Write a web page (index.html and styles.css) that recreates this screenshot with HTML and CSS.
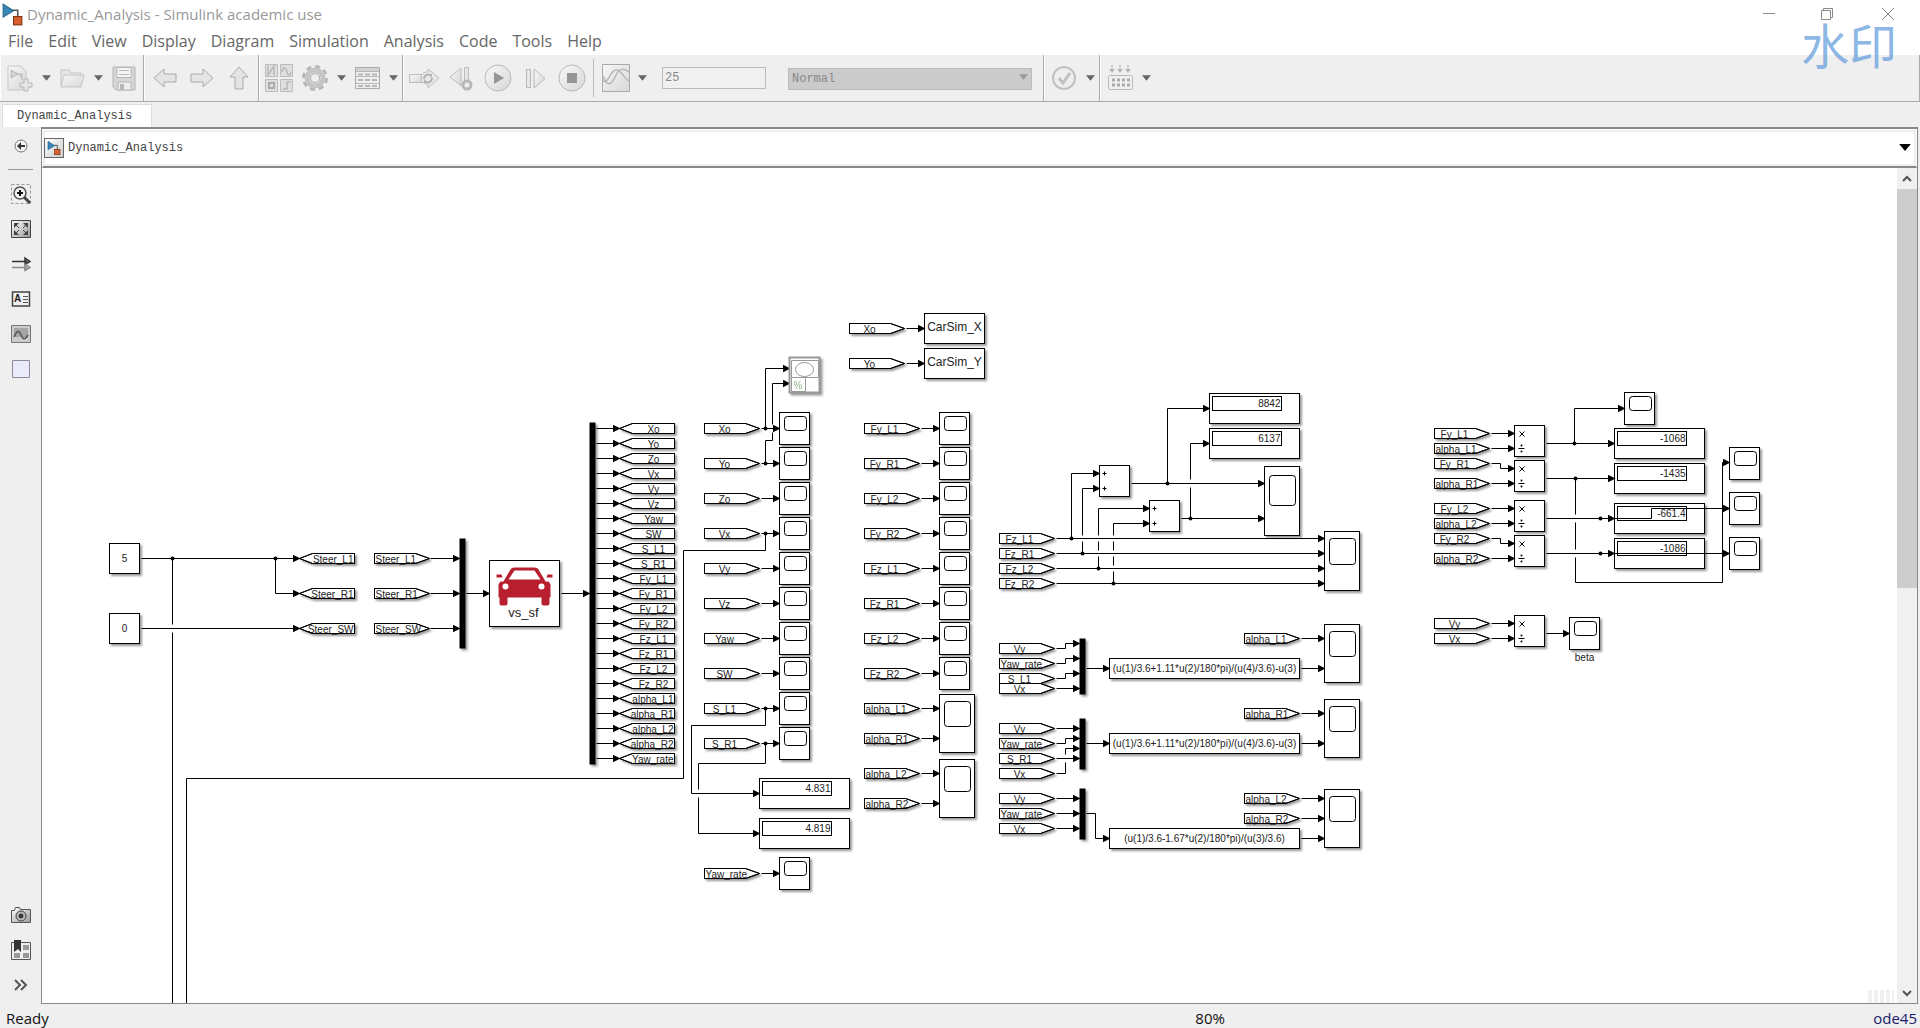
FILE: index.html
```html
<!DOCTYPE html>
<html lang="en">
<head>
  <meta charset="UTF-8" />
  <meta name="viewport" content="width=device-width, initial-scale=1.0" />
  <title>Dynamic_Analysis - Simulink academic use</title>
  <link rel="stylesheet" href="styles.css">
</head>
<body>
  <!-- shared gradients and symbols -->
  <svg class="defs" aria-hidden="true">
    <defs>
      <linearGradient id="soft" x1="0" y1="0" x2="1" y2="1">
        <stop offset="0" stop-color="#fafafa"/><stop offset="1" stop-color="#d2d2d2"/>
      </linearGradient>
      <linearGradient id="steel" x1="0" y1="0" x2="1" y2="1">
        <stop offset="0" stop-color="#fff"/><stop offset="1" stop-color="#999"/>
      </linearGradient>
      <symbol id="model" viewBox="0 0 20 24">
        <path d="M10 8h5v7" fill="none" stroke="#555" stroke-width="1.5"/>
        <path d="M1 2l10 6.500-10 6z" fill="#3a86b4" stroke="#23648e"/>
        <rect x="11" y="14" width="8" height="8" fill="#d65f30" stroke="#7e3013"/>
      </symbol>
      <symbol id="caret" viewBox="0 0 10 6"><path d="M0 0h10L5 6z" fill="#666"/></symbol>
    </defs>
  </svg>

  <header class="titlebar">
    <svg class="app-icon"><use href="#model"/></svg>
    <h1>Dynamic_Analysis - Simulink academic use</h1>
    <div class="window-buttons">
      <button aria-label="Minimize"><svg width="14" height="14"><path d="M1 6.500h12"/></svg></button>
      <button aria-label="Restore"><svg width="14" height="14"><path d="M1.500 3.500h9v9h-9zM3.500 3.500v-2h9v9h-2"/></svg></button>
      <button aria-label="Close"><svg width="14" height="14"><path d="M1 1l12 12M13 1L1 13"/></svg></button>
    </div>
  </header>

  <nav class="menu">
    <button>File</button>
    <button>Edit</button>
    <button>View</button>
    <button>Display</button>
    <button>Diagram</button>
    <button>Simulation</button>
    <button>Analysis</button>
    <button>Code</button>
    <button>Tools</button>
    <button>Help</button>
  </nav>

  <div class="toolbar">
    <div class="group">
      <button class="tool" aria-label="New model"><svg width="28" height="28">
        <path d="M2 2h13l5 5v19H2z" fill="url(#soft)" stroke="#bbb"/>
        <path d="M5 6l7 4-7 4zM12 10h4v6" fill="#ccc" stroke="#aaa"/>
        <path d="M18 15h4v4h4v4h-4v4h-4v-4h-4v-4h4z" fill="#e4e4e4" stroke="#aaa"/></svg></button>
      <button class="drop" aria-label="New options"><svg><use href="#caret"/></svg></button>
      <button class="tool" aria-label="Open"><svg width="28" height="28">
        <path d="M3 22V6h8l2 3h10v4" fill="#e4e4e4" stroke="#bbb"/>
        <path d="M6 11h20l-3 12H3z" fill="url(#soft)" stroke="#bbb"/></svg></button>
      <button class="drop" aria-label="Open options"><svg><use href="#caret"/></svg></button>
      <button class="tool" aria-label="Save"><svg width="28" height="28">
        <path d="M3 3h22v23H6l-3-3z" fill="#d2d2d2" stroke="#a5a5a5"/>
        <path d="M7 3.500h14v10H7z" fill="#f6f6f6" stroke="#aaa"/>
        <path d="M9 6.500h10M9 10.500h10" stroke="#aaa"/>
        <path d="M8 18h13v8H8z" fill="#eee" stroke="#aaa"/><path d="M10 20h4v6h-4z" fill="#aaa"/></svg></button>
    </div>
    <div class="group nav-group">
      <button class="tool" aria-label="Back"><svg width="28" height="28"><path d="M3 14L13 5v5h12v8H13v5z" fill="#e2e2e2" stroke="#999"/></svg></button>
      <button class="tool" aria-label="Forward"><svg width="28" height="28"><path d="M25 14L15 5v5H3v8h12v5z" fill="#e2e2e2" stroke="#999"/></svg></button>
      <button class="tool" aria-label="Up to parent"><svg width="28" height="28"><path d="M14 3l9 10h-5v12h-8V13H5z" fill="#e2e2e2" stroke="#999"/></svg></button>
    </div>
    <div class="group">
      <button class="tool" aria-label="Library browser"><svg width="28" height="28">
        <g fill="#dcdcdc" stroke="#b0b0b0"><path d="M.500.500h12v12H.500zM15.500.500h12v12h-12zM.500 15.500h12v12H.500zM15.500 15.500h12v12h-12z"/></g>
        <path d="M3 2v9L9 2v9M17 8c2-7 4-4 5 0s3 4 4 0M18 25h4v-7h4" fill="none" stroke="#aaa" stroke-width="1.500"/>
        <path d="M4 19h5v5H4z" fill="#ddd" stroke="#999" stroke-width="2"/></svg></button>
      <button class="tool" aria-label="Model configuration"><svg width="28" height="28">
        <circle cx="14" cy="14" r="11.500" fill="none" stroke="#aaa" stroke-width="3" stroke-dasharray="5 4"/>
        <circle cx="14" cy="14" r="8" fill="#eee" stroke="#bbb" stroke-width="5"/>
        <circle cx="14" cy="14" r="4.500" fill="#f0f0f0" stroke="#999"/></svg></button>
      <button class="drop" aria-label="Configuration options"><svg><use href="#caret"/></svg></button>
      <button class="tool" aria-label="Model explorer"><svg width="28" height="28">
        <path d="M2.500 3.500h24v21h-24z" fill="#f0f0f0" stroke="#999"/><path d="M3 4h23v3H3z" fill="#ccc"/>
        <path d="M3 7.500h23M3 12.500h23M3 19.500h23" stroke="#aaa"/>
        <path d="M5 10.500h19M5 16h19M5 22h19" stroke="#aaa" stroke-width="2" stroke-dasharray="5 2"/></svg></button>
      <button class="drop" aria-label="Explorer options"><svg><use href="#caret"/></svg></button>
    </div>
    <div class="group sim-group">
      <button class="tool" aria-label="Fast restart"><svg width="32" height="28">
        <path d="M1.500 10.500h13v8h-13z" fill="url(#soft)" stroke="#b0b0b0"/>
        <path d="M20 5l11 9-11 10v-4a6 6 0 0 1-7-6 6 6 0 0 1 7-6z" fill="#e6e6e6" stroke="#b0b0b0"/>
        <path d="M16 15a4 4 0 0 1 7-3v-2M24 14a4 4 0 0 1-7 3v2" fill="none" stroke="#999" stroke-width="1.500"/></svg></button>
      <button class="tool" aria-label="Step back"><svg width="28" height="28">
        <path d="M14 4v18L3 13z" fill="url(#soft)" stroke="#b0b0b0"/><path d="M17.500 3.500h4v14h-4z" fill="#e6e6e6" stroke="#b0b0b0"/>
        <circle cx="20" cy="21" r="4" fill="#eee" stroke="#aaa" stroke-width="3"/></svg></button>
      <button class="tool" aria-label="Run"><svg width="28" height="28">
        <circle cx="14" cy="14" r="13" fill="url(#soft)" stroke="#aaa"/><path d="M10 8l10 6-10 6z" fill="#808080"/></svg></button>
      <button class="tool" aria-label="Step forward"><svg width="28" height="28">
        <path d="M5.500 5.500h4v18h-4z" fill="#e6e6e6" stroke="#aaa"/><path d="M13 5l11 9.500L13 24z" fill="url(#soft)" stroke="#aaa"/></svg></button>
      <button class="tool" aria-label="Stop"><svg width="28" height="28">
        <circle cx="14" cy="14" r="13" fill="url(#soft)" stroke="#aaa"/><path d="M9 9h10v10H9z" fill="#808080"/></svg></button>
      <span class="divider"></span>
      <button class="tool" aria-label="Data inspector"><svg width="28" height="28">
        <path d="M.500.500h27v27H.500z" fill="url(#soft)" stroke="#999"/>
        <path d="M1 17c6 3 7-11 13-11s7 8 13 11M1 12c5 14 10 6 13-1s8-7 13-3" fill="none" stroke="#aaa" stroke-width="1.500"/></svg></button>
      <button class="drop" aria-label="Inspector options"><svg><use href="#caret"/></svg></button>
      <input class="stop-time" type="text" value="25" aria-label="Stop time" disabled>
      <div class="mode">
        <select aria-label="Simulation mode" disabled><option>Normal</option></select>
        <svg><use href="#caret"/></svg>
      </div>
    </div>
    <div class="group">
      <button class="tool" aria-label="Check"><svg width="28" height="28">
        <circle cx="14" cy="14" r="11" fill="#eee" stroke="#b5b5b5" stroke-width="2"/><path d="M9 14l4 5 7-10" fill="none" stroke="#b5b5b5" stroke-width="3"/></svg></button>
      <button class="drop" aria-label="Check options"><svg><use href="#caret"/></svg></button>
    </div>
    <div class="group last">
      <button class="tool" aria-label="Build"><svg width="28" height="28">
        <path d="M6 1v5M14 1v5M22 1v5" stroke="#aaa" stroke-width="1.500" stroke-dasharray="2 1"/>
        <path d="M3 5h6l-3 4zM11 5h6l-3 4zM19 5h6l-3 4z" fill="#aaa"/>
        <rect x="2.500" y="11.500" width="24" height="14" rx="2" fill="#f2f2f2" stroke="#aaa"/>
        <path d="M6 16h18M6 21h18" stroke="#999" stroke-width="3" stroke-dasharray="3 2"/></svg></button>
      <button class="drop" aria-label="Build options"><svg><use href="#caret"/></svg></button>
    </div>
  </div>

  <div class="tabs">
    <button class="tab">Dynamic_Analysis</button>
  </div>

  <main class="workspace">
    <aside class="palette">
      <button class="hide" aria-label="Hide browser"><svg width="20" height="20">
        <circle cx="10" cy="10" r="6" fill="#f4f4f4" stroke="#777"/><path d="M6 10l4-4v3h4v2h-4v3z" fill="#333"/></svg></button>
      <button aria-label="Zoom"><svg width="20" height="20">
        <path d="M.500.500h19v19H.500z" fill="none" stroke="#999" stroke-dasharray="3 2"/>
        <circle cx="9" cy="9" r="6" fill="#f2f2f2" stroke="#555" stroke-width="1.500"/>
        <path d="M9 6v6M6 9h6" stroke="#111" stroke-width="2"/><path d="M13 13l6 6" stroke="#444" stroke-width="3"/></svg></button>
      <button aria-label="Fit to view"><svg width="20" height="18">
        <path d="M.500.500h19v17H.500z" fill="url(#steel)" stroke="#444"/>
        <path d="M3 3h5L3 8zM17 3h-5l5 5zM3 15h5l-5-5zM17 15h-5l5-5z" fill="#444"/><path d="M4 4l4 4M16 4l-4 4M4 14l4-4M16 14l-4-4" stroke="#444"/></svg></button>
      <button aria-label="Sample time"><svg width="20" height="20">
        <path d="M1 7.500h15M14 4l5 3.500-5 3z" fill="#888" stroke="#333" stroke-width="1.500"/>
        <path d="M1 13.500h15M14 10l5 3.500-5 3z" fill="#ccc" stroke="#888" stroke-width="1.500"/></svg></button>
      <button aria-label="Annotation"><svg width="20" height="16">
        <path d="M1.500 1h17v14h-17z" fill="#f2f2f2" stroke="#444" stroke-width="1.500"/>
        <text x="3" y="11" class="glyph">A</text><path d="M12 5.500h5M12 8.500h5M12 11.500h5" stroke="#555"/></svg></button>
      <button aria-label="Image"><svg width="20" height="18">
        <path d="M.500.500h19v17H.500z" fill="#ccc" stroke="#777"/><path d="M3 3h14v9H3z" fill="#a5a5a5"/>
        <path d="M3 12c3-7 5-7 7-2s4 5 7 0" fill="none" stroke="#555" stroke-width="1.500"/></svg></button>
      <button aria-label="Area"><svg width="18" height="18"><path d="M.500.500h17v17H.500z" fill="#eaeafa" stroke="#8d8d99"/></svg></button>
      <span class="spacer"></span>
      <button aria-label="Screenshot"><svg width="20" height="16">
        <path d="M.500 3.500h3l1-3h4l1 2h10v13H.500z" fill="url(#steel)" stroke="#555"/>
        <circle cx="10" cy="9" r="5" fill="#bbb" stroke="#444"/><circle cx="10" cy="9" r="2" fill="#444" stroke="#222"/></svg></button>
      <button aria-label="Bookmarks"><svg width="20" height="20">
        <path d="M.500 2.500h19v17H.500z" fill="#eee" stroke="#555"/>
        <path d="M12 5h6v5h-6zM12 13h6v5h-6zM3 13h6v5H3z" fill="#999"/><path d="M3 0h7v12l-3-3-4 3z" fill="#333"/></svg></button>
      <button aria-label="More"><svg width="20" height="20"><path d="M4 5l5 5-5 5M10 5l5 5-5 5" fill="none" stroke="#555" stroke-width="2"/></svg></button>
    </aside>

    <section class="editor">
      <div class="breadcrumb">
        <span class="crumb-icon"><svg><use href="#model"/></svg></span>
        <a href="#">Dynamic_Analysis</a>
        <button aria-label="Show path"><svg><use href="#caret"/></svg></button>
      </div>
      <div class="view">
        <svg class="canvas">
          <defs>
            <marker id="arrow" viewBox="0 0 8 8" refX="7" refY="4" markerWidth="8" markerHeight="8" markerUnits="userSpaceOnUse" orient="auto"><path d="M0 0l8 4-8 4z"/></marker>
          </defs>
          <g id="diagram" transform="translate(-41.5 -167.5)"></g>
        </svg>
        <span class="grip"></span>
        <div class="scrollbar">
          <button aria-label="Scroll up"><svg width="10" height="8"><path d="M1 6l4-4 4 4"/></svg></button>
          <div class="thumb"></div>
          <button aria-label="Scroll down"><svg width="10" height="8"><path d="M1 2l4 4 4-4"/></svg></button>
        </div>
      </div>
    </section>
  </main>

  <footer class="status">
    <span>Ready</span>
    <span class="zoom">80%</span>
    <a href="#">ode45</a>
  </footer>

  <div class="watermark" lang="zh">水印</div>

<script src="script.js"></script>
</body>
</html>
```

FILE: styles.css
```css
* {
  box-sizing: border-box;
}

body, html {
  height: 100%;
  margin: 0;
}

body {
  display: flex;
  flex-direction: column;
  position: relative;
  overflow: hidden;
  background: #efefef;
  color: #111;
  font-family: "Open Sans", "Noto Sans", sans-serif;
  font-size: 15px;
}

button {
  display: flex;
  align-items: center;
  justify-content: center;
  padding: 0;
  border: none;
  background: none;
  color: inherit;
  font: inherit;
}

a {
  color: inherit;
  text-decoration: none;
}

svg {
  display: block;
}

.defs {
  position: absolute;
  width: 0;
  height: 0;
}

/* title and menu */
.titlebar {
  display: flex;
  align-items: center;
  height: 28px;
  padding-left: 2px;
  background: #fff;
}

.app-icon {
  width: 21px;
  height: 25px;
}

h1 {
  flex: 1;
  margin: 0 0 0 4px;
  color: #999;
  font-size: 15px;
  font-weight: normal;
}

.window-buttons {
  display: flex;
}

.window-buttons button {
  width: 58px;
  height: 28px;
}

.window-buttons button:last-child {
  width: 64px;
}

.window-buttons path {
  fill: none;
  stroke: #888;
}

.menu {
  display: flex;
  gap: 15px;
  height: 26px;
  padding: 0 8px 1px;
  background: #fff;
  color: #666;
  font-size: 16px;
}

/* toolbar */
.toolbar {
  display: flex;
  height: 48px;
  border-top: 1px solid #fff;
  border-bottom: 1px solid #aaa;
}

.group {
  display: flex;
  align-items: center;
  padding: 0 1px;
  border-left: 1px solid #fff;
  border-right: 1px solid #aaa;
}

.group.last {
  flex: 1;
}

.tool {
  width: 36px;
}

.tool svg {
  opacity: .8;
}

.nav-group .tool,
.sim-group .tool {
  width: 37px;
}

.drop {
  width: 16px;
}

.drop svg,
.mode svg {
  width: 9px;
  height: 6px;
}

.divider {
  width: 1px;
  height: 38px;
  margin: 0 3px;
  background: #bbb;
}

.stop-time,
select {
  height: 22px;
  margin: 0;
  border: 1px solid #bbb;
  border-radius: 0;
  font: 12px "Liberation Mono", monospace;
}

.stop-time {
  width: 104px;
  margin-left: 12px;
  padding: 0 2px;
  background: #f0f0f0;
  color: #888;
}

.mode {
  position: relative;
  margin: 0 10px 0 22px;
}

select {
  width: 244px;
  padding: 0 3px;
  background: #cbcbcb;
  color: #888;
  opacity: 1;
  appearance: none;
}

.mode svg {
  position: absolute;
  top: 8px;
  right: 4px;
  opacity: .5;
}

/* model tabs */
.tabs {
  height: 25px;
  padding: 2px 0 0 2px;
}

.tab {
  height: 23px;
  padding: 0 19px 0 14px;
  border: 1px solid #ddd;
  border-bottom: none;
  background: #fff;
  color: #444;
  font: 12px "Liberation Mono", monospace;
}

.workspace {
  display: flex;
  flex: 1;
  min-height: 0;
}

.palette {
  display: flex;
  flex-direction: column;
  align-items: center;
  width: 41px;
  padding-bottom: 2px;
}

.palette button {
  width: 40px;
  height: 35px;
}

.palette .hide {
  height: 43px;
  width: 25px;
  margin-bottom: 6px;
  border-bottom: 1px solid #999;
  padding-bottom: 5px;
}

.spacer {
  flex: 1;
}

.glyph {
  fill: #222;
  font: bold 10px "Liberation Sans", sans-serif;
}

.editor {
  display: flex;
  flex: 1;
  flex-direction: column;
  margin-right: 2px;
  border: 1px solid #86898c;
  border-top-width: 2px;
}

.breadcrumb {
  display: flex;
  align-items: center;
  height: 39px;
  padding: 0 5px 1px 1px;
  border: 1px solid #fff;
  border-bottom: 2px solid #86898c;
  background: #fff;
  box-shadow: inset 0 0 0 2px #eee;
  font: 12px "Liberation Mono", monospace;
}

.crumb-icon {
  margin-right: 4px;
  padding: 1px;
  border: 1px solid #666;
  background: linear-gradient(135deg, #fff, #ccc);
}

.crumb-icon svg {
  width: 16px;
  height: 16px;
}

.breadcrumb a {
  flex: 1;
  color: #444;
}

.breadcrumb button svg {
  width: 12px;
  height: 7px;
}

.breadcrumb button {
  filter: brightness(0);
}

/* model canvas */
.view {
  display: flex;
  position: relative;
  flex: 1;
  min-height: 0;
  background: #fff;
}

.canvas {
  flex: 1;
  height: 100%;
  font: 10px "Liberation Sans", Arial, sans-serif;
}

.block {
  filter: drop-shadow(2px 2px 1px rgba(0, 0, 0, .4));
}

.shape {
  fill: #fff;
  stroke: #000;
}

.mux {
  fill: #000;
}

.wire {
  fill: none;
  stroke: #000;
}

.label {
  fill: #222;
}

.medium {
  font-size: 12px;
}

.large {
  font-size: 13px;
}

.faded {
  fill: #fff;
  stroke: #999;
}

.percent {
  fill: #8ab58a;
}

.car {
  fill: #b82030;
}

.grip {
  position: absolute;
  right: 23px;
  bottom: 0;
  width: 26px;
  height: 13px;
  background: repeating-linear-gradient(90deg, #f0f0f0 0 4px, #fff 4px 6px);
}

.scrollbar {
  display: flex;
  flex-direction: column;
  width: 20px;
  background: #f0f0f0;
}

.scrollbar button {
  width: 100%;
  height: 21px;
}

.scrollbar path {
  fill: none;
  stroke: #555;
  stroke-width: 2px;
}

.thumb {
  height: 399px;
  margin-bottom: auto;
  background: #cdcdcd;
}

/* bottom bar */
.status {
  display: flex;
  align-items: center;
  height: 24px;
  padding: 4px 3px 0 6px;
}

.zoom {
  flex: 1;
  padding-left: 60%;
}

.status a {
  color: #1a1a6e;
}

.watermark {
  position: absolute;
  top: 18px;
  right: 23px;
  color: rgba(110, 163, 222, .8);
  font: 48px/50px "Noto Sans CJK SC", sans-serif;
  pointer-events: none;
}
```

FILE: script.js
```javascript
const diagram = document.getElementById('diagram');

function add(parent, name, attrs, text) {
  const el = document.createElementNS('http://www.w3.org/2000/svg', name);
  for (const key in attrs) el.setAttribute(key, attrs[key]);
  if (text) el.textContent = text;
  parent.appendChild(el);
  return el;
}

function block() {
  return add(diagram, 'g', { class: 'block' });
}

function box(x, y, width, height) {
  const g = block();
  add(g, 'rect', { class: 'shape', x, y, width, height });
  return g;
}

function label(x, y, text, anchor = 'middle', size = '') {
  add(diagram, 'text', { class: 'label ' + size, x, y, 'text-anchor': anchor }, text);
}

// x is the left edge, y the centre line; the outline goes over the text
function from(x, y, name) {
  const d = `M${x} ${y - 5}h41l14 5l-14 5h-41z`;
  add(block(), 'path', { class: 'shape', d });
  if (name.length > 7) label(x + 1, y + 4, name, 'start');
  else label(x + 20, y + 4, name);
  add(diagram, 'path', { class: 'wire', d });
}

// x is the tip
function goTo(x, y, name) {
  const d = `M${x} ${y}l13 -5h42v10h-42z`;
  add(block(), 'path', { class: 'shape', d });
  if (name.length > 7) label(x + 54, y + 4, name, 'end');
  else label(x + 34, y + 4, name);
  add(diagram, 'path', { class: 'wire', d });
}

function scope(x, y, w = 30, h = 32, top = 4, sh = 14) {
  const g = box(x, y, w, h);
  add(g, 'rect', { class: 'shape', x: x + 5, y: y + top, width: w === 30 ? 22 : 26, height: sh, rx: 3 });
}

function display(x, y, value) {
  const g = box(x, y, 90, 30);
  add(g, 'rect', { class: 'shape', x: x + 3, y: y + 3, width: 69, height: 14 });
  label(x + 71, y + 13, value, 'end');
}

function mux(x, y, height) {
  add(block(), 'rect', { class: 'mux', x, y, width: 6, height });
}

function wire(d) {
  add(diagram, 'path', { class: 'wire', d, 'marker-end': 'url(#arrow)' });
}

function dot(x, y) {
  add(diagram, 'circle', { cx: x, cy: y, r: 2 });
}

/* steering inputs and the vehicle */
[['5', 543], ['0', 613]].forEach(([value, y]) => {
  box(109, y, 30, 30);
  label(124, y + 18, value);
});
['Steer_L1', 'Steer_R1', 'Steer_SW'].forEach((name, i) => {
  const y = 558 + i * 35;
  goTo(299, y, name);
  from(374, y, name);
  wire(`M430 ${y}H459`);
});
wire('M141 558H299');
wire('M275 558V593H299');
wire('M141 628H299');
add(diagram, 'path', { class: 'wire', d: 'M172 558V624M172 632V1010' });
dot(172, 558);
dot(275, 558);
mux(459, 538, 110);

box(489, 560, 70, 66);
const car = add(diagram, 'g', { class: 'car' });
add(car, 'path', { d: 'M503 581l7-12q1-2 4-2h20q3 0 4 2l7 12h3q2 2 2 4v12h-1v6q0 2-2 2h-4q-2 0-2-2v-6h-34v6q0 2-2 2h-4q-2 0-2-2v-6h-1v-12q0-2 2-4zM508 579h32l-6-9h-20zM496 574h5l1 3h-6zM547 574h5v3h-6z', 'fill-rule': 'evenodd' });
[505, 541].forEach(cx => add(diagram, 'circle', { cx, cy: 586, r: 3, fill: '#fff' }));
label(523, 616, 'vs_sf', 'middle', 'large');
wire('M466 593H489');
wire('M561 593H589');

/* demux outputs */
mux(589, 422, 342);
['Xo', 'Yo', 'Zo', 'Vx', 'Vy', 'Vz', 'Yaw', 'SW', 'S_L1', 'S_R1', 'Fy_L1', 'Fy_R1',
 'Fy_L2', 'Fy_R2', 'Fz_L1', 'Fz_R1', 'Fz_L2', 'Fz_R2', 'alpha_L1', 'alpha_R1',
 'alpha_L2', 'alpha_R2', 'Yaw_rate'].forEach((name, i) => {
  goTo(619, 428 + i * 15, name);
  wire(`M596 ${428 + i * 15}H619`);
});

/* scopes, first column */
['Xo', 'Yo', 'Zo', 'Vx', 'Vy', 'Vz', 'Yaw', 'SW', 'S_L1', 'S_R1'].forEach((name, i) => {
  const y = 428 + i * 35;
  from(704, y, name);
  scope(779, y - 16);
  wire(`M761 ${y}H779`);
});
from(704, 873, 'Yaw_rate');
scope(779, 857);
wire('M761 873H779');
display(759, 778, '4.831');
display(759, 818, '4.819');
wire('M765 428V368H789');
wire('M765 463V440H772V432M772 424V383H789');
wire('M765 708V725H691V793H759');
wire('M765 743V763H698V789M698 797V833H759');
add(diagram, 'path', { class: 'wire', d: 'M765 533V550H683V778H186V1010' });
[428, 463, 533, 708, 743].forEach(y => dot(765, y));

/* XY graph */
const xy = block();
add(xy, 'rect', { class: 'faded', x: 789, y: 357, width: 30, height: 35, 'stroke-width': 2 });
add(xy, 'path', { class: 'faded', d: 'M791 360h27v17h-27zM791 377h14v14h-14z', 'stroke-width': 1 });
add(xy, 'ellipse', { class: 'faded', cx: 804, cy: 369, rx: 9, ry: 7 });
add(xy, 'text', { class: 'percent', x: 793, y: 388 }, '%');

/* scopes, second column */
['Fy_L1', 'Fy_R1', 'Fy_L2', 'Fy_R2', 'Fz_L1', 'Fz_R1', 'Fz_L2', 'Fz_R2'].forEach((name, i) => {
  const y = 428 + i * 35;
  from(864, y, name);
  scope(939, y - 16);
  wire(`M921 ${y}H939`);
});
[['alpha_L1', 708], ['alpha_R1', 738], ['alpha_L2', 773], ['alpha_R2', 803]].forEach(([name, y]) => {
  from(864, y, name);
});
scope(939, 694, 35, 58, 7, 25);
scope(939, 759, 35, 58, 7, 25);
[708, 738, 773, 803].forEach(y => wire(`M921 ${y}H939`));

/* workspace outputs */
[['Xo', 'CarSim_X', 328], ['Yo', 'CarSim_Y', 363]].forEach(([name, out, y]) => {
  from(849, y, name);
  box(924, y - 15, 60, 30);
  label(954, y + 2, out, 'middle', 'medium');
  wire(`M906 ${y}H924`);
});

/* vertical load sums */
['Fz_L1', 'Fz_R1', 'Fz_L2', 'Fz_R2'].forEach((name, i) => from(999, 538 + i * 15, name));
display(1209, 393, '8842');
display(1209, 428, '6137');
scope(1264, 466, 35, 69, 9, 30);
scope(1324, 531, 35, 59, 7, 26);
[[1099, 465], [1149, 500]].forEach(([x, y]) => {
  box(x, y, 30, 31);
  add(diagram, 'path', { class: 'wire', d: `M${x + 3} ${y + 8}h4m-2-2v4M${x + 3} ${y + 23}h4m-2-2v4` });
});
[538, 553, 568, 583].forEach(y => wire(`M1056 ${y}H1324`));
wire('M1071 538V473H1099');
wire('M1082 553V541M1082 535V488H1099');
wire('M1098 568V556M1098 550V541M1098 535V508H1149');
wire('M1113 583V571M1113 565V556M1113 550V541M1113 535V523H1149');
wire('M1131 483H1264');
wire('M1181 518H1264');
wire('M1167 483V408H1209');
wire('M1190 518V487M1190 479V443H1209');
dot(1071, 538);
dot(1082, 553);
dot(1098, 568);
dot(1113, 583);
dot(1167, 483);
dot(1190, 518);

/* slip angles */
const slip = '(u(1)/3.6+1.11*u(2)/180*pi)/(u(4)/3.6)-u(3)';
[['Vy', 648], ['Yaw_rate', 663], ['S_L1', 678], ['Vx', 688],
 ['Vy', 728], ['Yaw_rate', 743], ['S_R1', 758], ['Vx', 773],
 ['Vy', 798], ['Yaw_rate', 813], ['Vx', 828]].forEach(([name, y]) => from(999, y, name));
mux(1079, 638, 56);
mux(1079, 718, 51);
mux(1079, 788, 51);
[[658, slip], [733, slip], [828, '(u(1)/3.6-1.67*u(2)/180*pi)/(u(3)/3.6)']].forEach(([y, text]) => {
  box(1109, y, 190, 20);
  label(1204, y + 13, text);
  wire(`M1301 ${y + 10}H1324`);
});
[624, 699, 789].forEach(y => scope(1324, y, 35, 58, 7, 25));
[['alpha_L1', 638], ['alpha_R1', 713], ['alpha_L2', 798], ['alpha_R2', 818]].forEach(([name, y]) => {
  from(1244, y, name);
  wire(`M1301 ${y}H1324`);
});
['M1056 648H1065V643H1079', 'M1056 663H1065V658H1079', 'M1056 678H1065V673H1079', 'M1056 688H1079',
 'M1056 728H1079', 'M1056 743H1065V738H1079', 'M1056 758H1079', 'M1056 773H1065V762M1065 754V748H1079',
 'M1056 798H1079', 'M1056 813H1079', 'M1056 828H1079',
 'M1086 668H1109', 'M1086 743H1109', 'M1086 813H1095V838H1109'].forEach(wire);

/* cornering stiffness */
[['Fy_L1', 433], ['alpha_L1', 448], ['Fy_R1', 463], ['alpha_R1', 483],
 ['Fy_L2', 508], ['alpha_L2', 523], ['Fy_R2', 538], ['alpha_R2', 558],
 ['Vy', 623], ['Vx', 638]].forEach(([name, y]) => from(1434, y, name));
[425, 460, 500, 535, 615].forEach(y => {
  box(1514, y, 30, 31);
  add(diagram, 'path', { class: 'wire', d: `M1519 ${y + 6}l5 5m0-5l-5 5M1518 ${y + 23}h6` });
  add(diagram, 'circle', { cx: 1521, cy: y + 20, r: 1 });
  add(diagram, 'circle', { cx: 1521, cy: y + 26, r: 1 });
});
[433, 448, 483, 508, 523, 558, 623, 638].forEach(y => wire(`M1491 ${y}H1514`));
wire('M1491 463H1500V468H1514');
wire('M1491 538H1500V543H1514');
display(1614, 428, '-1068');
display(1614, 463, '-1435');
display(1614, 503, '-661.4');
display(1614, 538, '-1086');
scope(1624, 392);
[447, 492, 537].forEach(y => scope(1729, y));
[443, 478, 518, 553].forEach(y => wire(`M1546 ${y}H1614`));
wire('M1574 443V408H1624');
wire('M1575 478V514M1575 522V549M1575 557V582H1722V462H1729');
wire('M1614 518H1651V508H1729');
wire('M1614 553H1729');
dot(1574, 443);
dot(1575, 478);
dot(1600, 518);
dot(1600, 553);
scope(1569, 617);
wire('M1546 633H1569');
label(1584, 660, 'beta');
```
